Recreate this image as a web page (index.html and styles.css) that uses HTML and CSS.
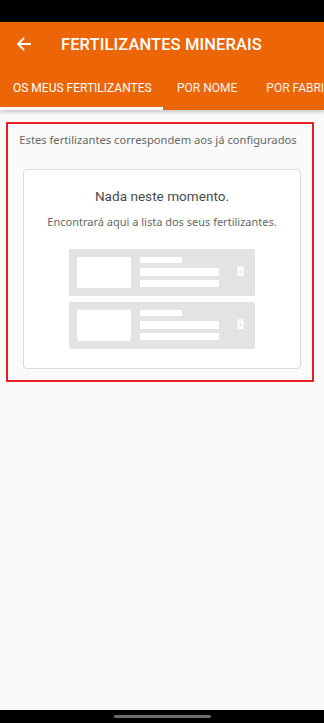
FILE: index.html
```html
<!DOCTYPE html>
<html lang="pt">
<head>
<meta charset="utf-8">
<link rel="stylesheet" href="styles.css">
</head>
<body>
<div class="status"></div>
<header class="appbar">
  <div class="toolbar">
    <svg class="back" width="16" height="16" viewBox="0 0 16 16"><path d="M15 8H2M8 2L2 8l6 6" fill="none" stroke="#fff" stroke-width="1.8"/></svg>
    <h1 class="title">FERTILIZANTES MINERAIS</h1>
  </div>
  <nav class="tabs">
    <div class="tab active">OS MEUS FERTILIZANTES</div>
    <div class="tab">POR NOME</div>
    <div class="tab">POR FABRICANTE</div>
  </nav>
</header>
<main class="content">
  <section class="frame">
    <p class="info">Estes fertilizantes correspondem aos já configurados</p>
    <div class="card">
      <h2 class="empty-title">Nada neste momento.</h2>
      <p class="empty-sub">Encontrará aqui a lista dos seus fertilizantes.</p>
      <div class="ph">
        <div class="ph-img"></div>
        <div class="ph-lines"><span class="l1"></span><span class="l2"></span><span class="l3"></span></div>
        <svg class="trash" width="7" height="10" viewBox="0 0 7 10"><rect x="0" y="0.5" width="7" height="1" fill="#fff"/><rect x="2.5" y="0" width="2" height="1" fill="#fff"/><rect x="0.5" y="2" width="6" height="8" fill="#fff"/><path d="M2.3 4.5l2.4 2.6M4.7 4.5l-2.4 2.6" stroke="#ccc" stroke-width="0.8"/></svg>
      </div>
      <div class="ph">
        <div class="ph-img"></div>
        <div class="ph-lines"><span class="l1"></span><span class="l2"></span><span class="l3"></span></div>
        <svg class="trash" width="7" height="10" viewBox="0 0 7 10"><rect x="0" y="0.5" width="7" height="1" fill="#fff"/><rect x="2.5" y="0" width="2" height="1" fill="#fff"/><rect x="0.5" y="2" width="6" height="8" fill="#fff"/><path d="M2.3 4.5l2.4 2.6M4.7 4.5l-2.4 2.6" stroke="#ccc" stroke-width="0.8"/></svg>
      </div>
    </div>
  </section>
</main>
<div class="navbar"><div class="pill"></div></div>
</body>
</html>
```
FILE: styles.css
```css
* { box-sizing: border-box; }
html, body { margin: 0; padding: 0; }
body {
  width: 324px;
  height: 723px;
  background: #fafafa;
  font-family: Roboto, "Noto Sans", sans-serif;
  display: flex;
  flex-direction: column;
  overflow: hidden;
}
.status { height: 22px; background: #000; flex: none; }
.appbar {
  background: #ec6608;
  flex: none;
  box-shadow: 0 2px 4px rgba(0,0,0,0.22);
  position: relative;
  z-index: 1;
}
.toolbar {
  height: 44px;
  display: flex;
  align-items: center;
}
.back { margin-left: 16px; flex: none; }
.title {
  margin: 0 0 0 29px;
  color: #fff;
  font-size: 16.5px;
  font-weight: 500;
  letter-spacing: 0.1px;
  white-space: nowrap;
}
.tabs {
  height: 44px;
  display: flex;
  white-space: nowrap;
  overflow: hidden;
}
.tab {
  color: #fff;
  font-size: 12px;
  padding: 0 15px 0 14px;
  display: flex;
  align-items: center;
  flex: none;
  opacity: 0.92;
}
.tab.active {
  width: 163px;
  padding-left: 13px;
  border-bottom: 3px solid #fff;
  padding-top: 3px;
  opacity: 1;
}
.content { flex: 1; padding: 12px 10px 0 6px; }
.frame {
  border: 2px solid #ed1c24;
  padding: 8px 11px 11px 15px;
}
.info {
  margin: 0 2px 0 -6px;
  font-family: "Noto Sans", sans-serif;
  font-size: 11.2px;
  color: #666;
  text-align: center;
  line-height: 16px;
}
.card {
  margin-top: 21px;
  background: #fff;
  border: 1px solid #dcdcdc;
  border-radius: 4px;
  padding: 17px 45px 19px 45px;
  display: flex;
  flex-direction: column;
  align-items: stretch;
}
.empty-title {
  margin: 0;
  text-align: center;
  font-size: 13.6px;
  font-weight: 400;
  color: #4a4a4a;
  line-height: 18px;
}
.empty-sub {
  margin: 9px -30px 0;
  text-align: center;
  font-family: "Noto Sans", sans-serif;
  font-size: 11px;
  color: #666;
  line-height: 16px;
  white-space: nowrap;
}
.ph {
  background: #e3e3e3;
  border-radius: 2px;
  height: 47px;
  margin-top: 6px;
  display: flex;
  align-items: flex-start;
  padding: 8px 0 0 8px;
}
.ph:first-of-type { margin-top: 19px; }
.ph-img {
  width: 54px;
  height: 31px;
  background: #fff;
  border-radius: 2px;
  flex: none;
}
.ph-lines {
  margin-left: 9px;
  display: flex;
  flex-direction: column;
  width: 79px;
}
.ph-lines span { background: #fff; display: block; }
.l1 { width: 42px; height: 6px; }
.l2 { height: 8px; margin-top: 5px; }
.l3 { height: 7px; margin-top: 4px; }
.trash { margin: 9px 0 0 18px; flex: none; }
.navbar {
  height: 13px;
  background: #000;
  flex: none;
  display: flex;
  justify-content: center;
  align-items: center;
}
.pill { width: 97px; height: 3px; background: #6b6b6b; border-radius: 2px; }
```
